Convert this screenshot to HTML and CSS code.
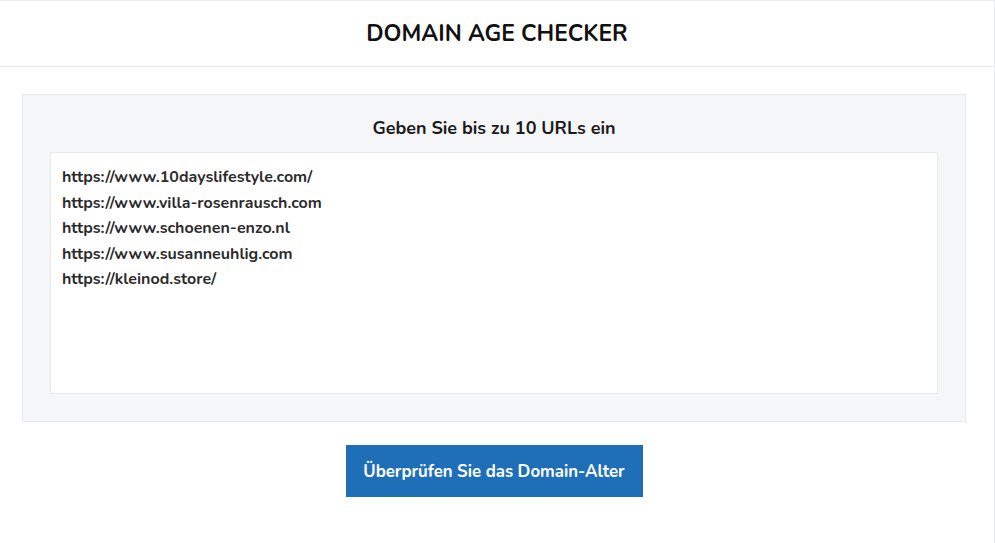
FILE: index.html
```html
<!DOCTYPE html>
<html lang="de">

<head>
  <meta charset="UTF-8">
  <title>Domain Age Checker</title>
  <link rel="stylesheet" href="styles.css">
</head>

<body>
  <div class="page">
    <header class="topbar">
      <h1>DOMAIN AGE CHECKER</h1>
    </header>
    <main class="main">
      <form class="checker" onsubmit="return false">
        <div class="panel">
          <label class="panel-title" for="urls">Geben Sie bis zu 10 URLs ein</label>
          <textarea id="urls" class="urls" spellcheck="false">https://www.10dayslifestyle.com/
https://www.villa-rosenrausch.com
https://www.schoenen-enzo.nl
https://www.susanneuhlig.com
https://kleinod.store/</textarea>
        </div>
        <div class="actions">
          <button type="submit" class="btn">Überprüfen Sie das Domain-Alter</button>
        </div>
      </form>
    </main>
  </div>
</body>

</html>
```

FILE: styles.css
```css
html,
body {
  height: 100%;
}

body {
  margin: 0;
  font-family: "Nunito", "Lato", "Open Sans", sans-serif;
  color: #222;
  background: #fff;
}

.page {
  box-sizing: border-box;
  min-height: 100%;
  border-top: 1px solid #e9ebf0;
  border-right: 1px solid #e9ebf0;
}

.topbar {
  height: 65px;
  display: flex;
  align-items: center;
  justify-content: center;
  border-bottom: 1px solid #e9ebf0;
}

.topbar h1 {
  margin: 0;
  font-size: 22.8px;
  font-weight: 700;
  color: #111;
}

.main {
  padding: 27px 28px 0 22px;
}

.panel {
  display: flex;
  flex-direction: column;
  align-items: center;
  padding: 21px 27px 27px;
  background: #f5f6f8;
  border: 1px solid #e7e9ee;
}

.panel-title {
  line-height: 24px;
  margin-bottom: 12px;
  font-size: 18px;
  font-weight: 700;
  color: #1b1b1b;
}

.urls {
  box-sizing: border-box;
  width: 100%;
  height: 242px;
  padding: 12px 11px;
  border: 1px solid #e7e9ee;
  background: #fff;
  font-family: inherit;
  font-size: 16px;
  font-weight: 700;
  line-height: 25.6px;
  color: #2b2b2b;
  resize: none;
  outline: none;
}

.actions {
  display: flex;
  justify-content: center;
  padding-top: 23px;
}

.btn {
  width: 297px;
  height: 52px;
  border: 0;
  background: #1f6fb8;
  color: #fff;
  font-family: inherit;
  font-size: 16.8px;
  font-weight: 700;
  cursor: pointer;
}
```
